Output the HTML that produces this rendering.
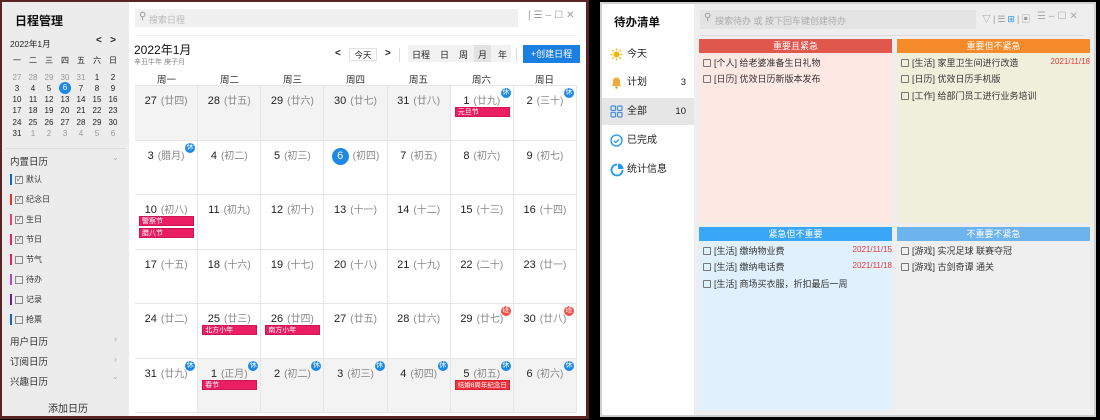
<!DOCTYPE html>
<html><head><meta charset="utf-8"><style>
*{margin:0;padding:0;box-sizing:border-box}
body{width:1100px;height:420px;background:#000;position:relative;overflow:hidden;font-family:"Liberation Sans","Noto Sans CJK SC",sans-serif;color:#222}
.a{position:absolute;white-space:nowrap}
#lw{position:absolute;left:0;top:0;width:589px;height:419px;background:#5b2424}
#ls{position:absolute;left:2px;top:2px;width:127px;height:414px;background:#ececec}
#lm{position:absolute;left:129px;top:2px;width:457px;height:414px;background:#fff}
.mini span{position:absolute;width:16px;text-align:center;font-size:8px;color:#222}
.mini .g{color:#999}
.cal{position:absolute;left:6px;top:83px;width:442px;height:328px;display:grid;grid-template-columns:repeat(7,1fr);grid-template-rows:repeat(6,1fr);border-top:1px solid #e4e4e4}
.c{position:relative;border-right:1px solid #e6e6e6;border-bottom:1px solid #e6e6e6;background:#fff}
.c.g{background:#f3f3f3}
.c .d{position:absolute;left:0;right:0;top:6px;text-align:center;font-size:11px;color:#222}
.c .d i{font-style:normal;color:#888;font-size:10px;margin-left:4px}
.b{position:absolute;right:2px;top:2px;width:10px;height:10px;border-radius:50%;background:#1e88e5;color:#fff;font-size:7px;line-height:10px;text-align:center}
.b.r{background:#f0504a}
.e{position:absolute;left:4px;width:55px;height:10px;background:#e91e63;color:#fff;font-size:7px;line-height:9px;padding-left:2px;border:1px solid #d01556;overflow:hidden}
.wd span{position:absolute;top:70px;width:63px;text-align:center;font-size:9.5px;color:#333}
.cat{position:absolute;left:8px;font-size:8px;color:#333}
.cat b{display:inline-block;width:2px;height:11px;vertical-align:middle;margin-right:3px}
.cat u{display:inline-block;width:8px;height:8px;border:1px solid #888;vertical-align:middle;margin-right:3px;text-decoration:none;font-size:7px;line-height:6px;text-align:center;color:#555}
.sec{position:absolute;left:8px;font-size:9.5px;color:#333}
#rw{position:absolute;left:600px;top:2px;width:496px;height:415px;background:#d0d0d0}
#rs{position:absolute;left:602px;top:4px;width:92px;height:411px;background:#fff}
#rm{position:absolute;left:694px;top:4px;width:400px;height:411px;background:#eeeeee}
.ni{position:absolute;left:0;width:92px;height:27px;font-size:10px;color:#222;line-height:27px;padding-left:25px}
.ni .n{position:absolute;right:8px;font-size:9.5px}
.ni svg{position:absolute;left:8px;top:7px}
.q{position:absolute;width:193px}
.qh{height:14px;color:#fff;font-size:9px;text-align:center;line-height:14px}
.it{position:absolute;left:4px;font-size:9px;color:#333}
.it u{display:inline-block;width:8px;height:8px;border:1px solid #777;border-radius:1px;vertical-align:-1px;margin-right:3px;text-decoration:none}
.dt{position:absolute;right:0;font-size:8px;color:#e53935}
.seg{position:absolute;top:46px;font-size:9px;color:#222}
</style></head><body>
<div id="lw"></div>
<div id="ls">
 <div class="a" style="left:13px;top:10px;font-size:12px;font-weight:bold;color:#111">日程管理</div>
 <div class="a" style="left:8px;top:36px;font-size:8.5px">2022年1月</div>
 <div class="a" style="left:94px;top:33px;font-size:10px;font-weight:bold">&lt;&nbsp;&nbsp;&nbsp;&gt;</div>
 <div class="mini">
  <span style="left:7px;top:53px">一</span><span style="left:23px;top:53px">二</span><span style="left:39px;top:53px">三</span><span style="left:55px;top:53px">四</span><span style="left:71px;top:53px">五</span><span style="left:87px;top:53px">六</span><span style="left:103px;top:53px">日</span>
  <span class="g" style="left:7px;top:71px">27</span><span class="g" style="left:23px;top:71px">28</span><span class="g" style="left:39px;top:71px">29</span><span class="g" style="left:55px;top:71px">30</span><span class="g" style="left:71px;top:71px">31</span><span style="left:87px;top:71px">1</span><span style="left:103px;top:71px">2</span>
  <span style="left:7px;top:82px">3</span><span style="left:23px;top:82px">4</span><span style="left:39px;top:82px">5</span><span style="left:57px;top:80px;width:12px;height:12px;border-radius:50%;background:#1e88e5;color:#fff;line-height:12px">6</span><span style="left:71px;top:82px">7</span><span style="left:87px;top:82px">8</span><span style="left:103px;top:82px">9</span>
  <span style="left:7px;top:93px">10</span><span style="left:23px;top:93px">11</span><span style="left:39px;top:93px">12</span><span style="left:55px;top:93px">13</span><span style="left:71px;top:93px">14</span><span style="left:87px;top:93px">15</span><span style="left:103px;top:93px">16</span>
  <span style="left:7px;top:104px">17</span><span style="left:23px;top:104px">18</span><span style="left:39px;top:104px">19</span><span style="left:55px;top:104px">20</span><span style="left:71px;top:104px">21</span><span style="left:87px;top:104px">22</span><span style="left:103px;top:104px">23</span>
  <span style="left:7px;top:116px">24</span><span style="left:23px;top:116px">25</span><span style="left:39px;top:116px">26</span><span style="left:55px;top:116px">27</span><span style="left:71px;top:116px">28</span><span style="left:87px;top:116px">29</span><span style="left:103px;top:116px">30</span>
  <span style="left:7px;top:127px">31</span><span class="g" style="left:23px;top:127px">1</span><span class="g" style="left:39px;top:127px">2</span><span class="g" style="left:55px;top:127px">3</span><span class="g" style="left:71px;top:127px">4</span><span class="g" style="left:87px;top:127px">5</span><span class="g" style="left:103px;top:127px">6</span>
 </div>
 <div class="a" style="left:4px;top:146px;width:120px;height:1px;background:#ddd"></div>
 <div class="sec" style="top:152px">内置日历</div><div class="a" style="left:110px;top:151px;font-size:8px;color:#aaa">⌄</div>
 <div class="cat" style="top:172px"><b style="background:#1565c0"></b><u>✓</u>默认</div>
 <div class="cat" style="top:192px"><b style="background:#f0302a"></b><u>✓</u>纪念日</div>
 <div class="cat" style="top:212px"><b style="background:#ee3a7a"></b><u>✓</u>生日</div>
 <div class="cat" style="top:232px"><b style="background:#e91e63"></b><u>✓</u>节日</div>
 <div class="cat" style="top:252px"><b style="background:#e91e63"></b><u></u>节气</div>
 <div class="cat" style="top:272px"><b style="background:#b044d0"></b><u></u>待办</div>
 <div class="cat" style="top:292px"><b style="background:#6a1b9a"></b><u></u>记录</div>
 <div class="cat" style="top:312px"><b style="background:#1565c0"></b><u></u>抢票</div>
 <div class="sec" style="top:332px">用户日历</div><div class="a" style="left:112px;top:332px;font-size:9px;color:#aaa">›</div>
 <div class="sec" style="top:352px">订阅日历</div><div class="a" style="left:112px;top:352px;font-size:9px;color:#aaa">›</div>
 <div class="sec" style="top:372px">兴趣日历</div><div class="a" style="left:110px;top:370px;font-size:8px;color:#aaa">⌄</div>
 <div class="a" style="left:46px;top:398px;font-size:10px;color:#333">添加日历</div>
</div>
<div id="lm">
 <div class="a" style="left:6px;top:7px;width:383px;height:18px;background:#f0f0f0"></div>
 <div class="a" style="left:10px;top:9px;font-size:10px;color:#999">⚲</div>
 <div class="a" style="left:20px;top:11px;font-size:9px;color:#bbb">搜索日程</div>
 <div class="a" style="left:399px;top:8px;font-size:10px;color:#999;letter-spacing:3px">|☰–☐✕</div>
 <div class="a" style="left:6px;top:33px;width:442px;height:1px;background:#eee"></div>
 <div class="a" style="left:5px;top:39px;font-size:12px;color:#111">2022年1月</div>
 <div class="a" style="left:5px;top:55px;font-size:7px;color:#888">辛丑牛年 庚子月</div>
 <div class="a" style="left:206px;top:46px;font-size:10px;font-weight:bold">&lt;</div>
 <div class="a" style="left:220px;top:46px;width:28px;height:13px;border:1px solid #e2e2e2;font-size:8.5px;text-align:center;line-height:12px">今天</div>
 <div class="a" style="left:256px;top:46px;font-size:10px;font-weight:bold">&gt;</div>
 <div class="a" style="left:270px;top:46px;width:1px;height:14px;background:#ddd"></div>
 <div class="a" style="left:279px;top:43px;width:103px;height:17px;background:#f2f2f2"></div>
 <div class="a" style="left:345px;top:43px;width:17px;height:17px;background:#e2e2e2"></div>
 <div class="seg" style="left:283px">日程</div><div class="seg" style="left:311px">日</div><div class="seg" style="left:330px">周</div><div class="seg" style="left:349px">月</div><div class="seg" style="left:369px">年</div>
 <div class="a" style="left:387px;top:46px;width:1px;height:14px;background:#ddd"></div>
 <div class="a" style="left:394px;top:43px;width:57px;height:18px;background:#1a7fe0;color:#fff;font-size:9px;text-align:center;line-height:18px">+创建日程</div>
 <div class="wd"><span style="left:6px">周一</span><span style="left:69px">周二</span><span style="left:132px">周三</span><span style="left:195px">周四</span><span style="left:258px">周五</span><span style="left:321px">周六</span><span style="left:384px">周日</span></div>
 <div class="cal">
  <div class="c g"><div class="d">27<i>(廿四)</i></div></div>
  <div class="c g"><div class="d">28<i>(廿五)</i></div></div>
  <div class="c g"><div class="d">29<i>(廿六)</i></div></div>
  <div class="c g"><div class="d">30<i>(廿七)</i></div></div>
  <div class="c g"><div class="d">31<i>(廿八)</i></div></div>
  <div class="c"><div class="d">1<i>(廿九)</i></div><div class="b">休</div><div class="e" style="top:21px">元旦节</div></div>
  <div class="c"><div class="d">2<i>(三十)</i></div><div class="b">休</div></div>
  <div class="c"><div class="d">3<i>(腊月)</i></div><div class="b">休</div></div>
  <div class="c"><div class="d">4<i>(初二)</i></div></div>
  <div class="c"><div class="d">5<i>(初三)</i></div></div>
  <div class="c"><div class="d"><span style="display:inline-block;width:17px;height:17px;border-radius:50%;background:#1e88e5;color:#fff;line-height:17px;margin-top:-3px">6</span><i>(初四)</i></div></div>
  <div class="c"><div class="d">7<i>(初五)</i></div></div>
  <div class="c"><div class="d">8<i>(初六)</i></div></div>
  <div class="c"><div class="d">9<i>(初七)</i></div></div>
  <div class="c"><div class="d">10<i>(初八)</i></div><div class="e" style="top:21px">警察节</div><div class="e" style="top:33px">腊八节</div></div>
  <div class="c"><div class="d">11<i>(初九)</i></div></div>
  <div class="c"><div class="d">12<i>(初十)</i></div></div>
  <div class="c"><div class="d">13<i>(十一)</i></div></div>
  <div class="c"><div class="d">14<i>(十二)</i></div></div>
  <div class="c"><div class="d">15<i>(十三)</i></div></div>
  <div class="c"><div class="d">16<i>(十四)</i></div></div>
  <div class="c"><div class="d">17<i>(十五)</i></div></div>
  <div class="c"><div class="d">18<i>(十六)</i></div></div>
  <div class="c"><div class="d">19<i>(十七)</i></div></div>
  <div class="c"><div class="d">20<i>(十八)</i></div></div>
  <div class="c"><div class="d">21<i>(十九)</i></div></div>
  <div class="c"><div class="d">22<i>(二十)</i></div></div>
  <div class="c"><div class="d">23<i>(廿一)</i></div></div>
  <div class="c"><div class="d">24<i>(廿二)</i></div></div>
  <div class="c"><div class="d">25<i>(廿三)</i></div><div class="e" style="top:21px">北方小年</div></div>
  <div class="c"><div class="d">26<i>(廿四)</i></div><div class="e" style="top:21px">南方小年</div></div>
  <div class="c"><div class="d">27<i>(廿五)</i></div></div>
  <div class="c"><div class="d">28<i>(廿六)</i></div></div>
  <div class="c"><div class="d">29<i>(廿七)</i></div><div class="b r">班</div></div>
  <div class="c"><div class="d">30<i>(廿八)</i></div><div class="b r">班</div></div>
  <div class="c"><div class="d">31<i>(廿九)</i></div><div class="b">休</div></div>
  <div class="c g"><div class="d">1<i>(正月)</i></div><div class="b">休</div><div class="e" style="top:21px">春节</div></div>
  <div class="c g"><div class="d">2<i>(初二)</i></div><div class="b">休</div></div>
  <div class="c g"><div class="d">3<i>(初三)</i></div><div class="b">休</div></div>
  <div class="c g"><div class="d">4<i>(初四)</i></div><div class="b">休</div></div>
  <div class="c g"><div class="d">5<i>(初五)</i></div><div class="b">休</div><div class="e" style="top:21px;background:#f0303a;border-color:#d82030;font-size:6.5px">结婚8周年纪念日</div></div>
  <div class="c g"><div class="d">6<i>(初六)</i></div><div class="b">休</div></div>
 </div>
</div>

<div id="rw"></div>
<div id="rs">
 <div class="a" style="left:12px;top:10px;font-size:11.5px;font-weight:bold;color:#111">待办清单</div>
 <div class="ni" style="top:37px"><svg width="13" height="13" viewBox="0 0 13 13"><circle cx="6.5" cy="6.5" r="3" fill="#f5b400"/><g stroke="#f5b400" stroke-width="1.2"><path d="M6.5 0.5v2M6.5 10.5v2M0.5 6.5h2M10.5 6.5h2M2.2 2.2l1.4 1.4M9.4 9.4l1.4 1.4M2.2 10.8l1.4-1.4M9.4 3.6l1.4-1.4"/></g></svg>今天</div>
 <div class="ni" style="top:65px"><svg width="13" height="13" viewBox="0 0 13 13"><path d="M6.5 1.5c-2.2 0-3.5 1.6-3.5 3.8v3l-1.2 1.7h9.4l-1.2-1.7v-3c0-2.2-1.3-3.8-3.5-3.8z" fill="#f2a93b"/><circle cx="6.5" cy="11.5" r="1.2" fill="#e0932a"/></svg>计划<span class="n">3</span></div>
 <div class="ni" style="top:94px;background:#e6e6e6"><svg width="13" height="13" viewBox="0 0 13 13" fill="none" stroke="#4a90e2" stroke-width="1.2"><rect x="1" y="1" width="4.5" height="4.5" rx="1"/><rect x="7.5" y="1" width="4.5" height="4.5" rx="1"/><rect x="1" y="7.5" width="4.5" height="4.5" rx="1"/><rect x="7.5" y="7.5" width="4.5" height="4.5" rx="1"/></svg>全部<span class="n">10</span></div>
 <div class="ni" style="top:123px"><svg width="13" height="13" viewBox="0 0 13 13" fill="none" stroke="#2196f3" stroke-width="1.3"><circle cx="6.5" cy="6.5" r="5.5"/><path d="M4 6.8l1.8 1.7 3.3-3.3"/></svg>已完成</div>
 <div class="ni" style="top:152px"><svg width="14" height="14" viewBox="0 0 14 14"><path d="M7 1.5a5.5 5.5 0 1 0 5.5 5.5" fill="none" stroke="#2196f3" stroke-width="1.8"/><path d="M8 0.5v5.5h5.5a5.5 5.5 0 0 0-5.5-5.5z" fill="#2196f3"/></svg>统计信息</div>
</div>
<div id="rm">
 <div class="a" style="left:6px;top:6px;width:276px;height:19px;background:#e4e4e4"></div>
 <div class="a" style="left:10px;top:8px;font-size:10px;color:#999">⚲</div>
 <div class="a" style="left:21px;top:10px;font-size:9px;color:#aaa">搜索待办 或 按下回车键创建待办</div>
 <div class="a" style="left:288px;top:8px;font-size:9px;color:#999;letter-spacing:2px">▽|☰<span style="color:#2196f3">⊞</span>|▣</div>
 <div class="a" style="left:343px;top:7px;font-size:10px;color:#aaa;letter-spacing:3px">☰–☐✕</div>
 <div class="a" style="left:6px;top:31px;width:384px;height:1px;background:#ddd"></div>
 <div class="q" style="left:5px;top:35px;height:184px;background:#fde8e4"><div class="qh" style="background:#e0574d">重要且紧急</div>
  <div class="it" style="top:17px"><u></u>[个人] 给老婆准备生日礼物</div>
  <div class="it" style="top:33px"><u></u>[日历] 优效日历新版本发布</div></div>
 <div class="q" style="left:203px;top:35px;height:184px;background:#eef0db"><div class="qh" style="background:#f58a2a">重要但不紧急</div>
  <div class="it" style="top:17px"><u></u>[生活] 家里卫生间进行改造</div><div class="dt" style="top:18px">2021/11/18</div>
  <div class="it" style="top:33px"><u></u>[日历] 优效日历手机版</div>
  <div class="it" style="top:50px"><u></u>[工作] 给部门员工进行业务培训</div></div>
 <div class="q" style="left:5px;top:223px;height:183px;background:#e0f1fd"><div class="qh" style="background:#3aa6f7">紧急但不重要</div>
  <div class="it" style="top:17px"><u></u>[生活] 缴纳物业费</div><div class="dt" style="top:18px">2021/11/15</div>
  <div class="it" style="top:33px"><u></u>[生活] 缴纳电话费</div><div class="dt" style="top:34px">2021/11/18</div>
  <div class="it" style="top:50px"><u></u>[生活] 商场买衣服，折扣最后一周</div></div>
 <div class="q" style="left:203px;top:223px;height:183px;background:#efefef"><div class="qh" style="background:#6db3ee">不重要不紧急</div>
  <div class="it" style="top:17px"><u></u>[游戏] 实况足球 联赛夺冠</div>
  <div class="it" style="top:33px"><u></u>[游戏] 古剑奇谭 通关</div></div>
</div>
</body></html>
